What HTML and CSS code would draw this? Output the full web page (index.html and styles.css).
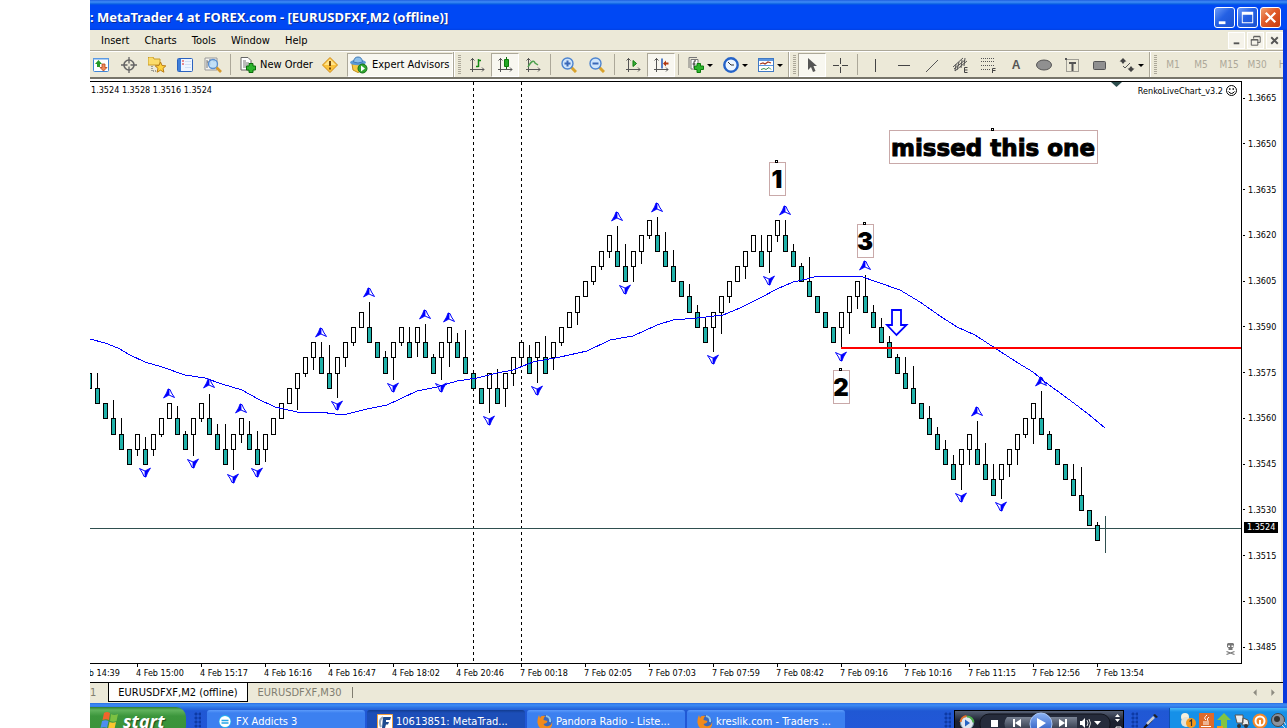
FILE: index.html
```html
<!DOCTYPE html>
<html lang="en">
<head>
<meta charset="utf-8">
<title>MetaTrader 4 at FOREX.com</title>
<link rel="stylesheet" href="styles.css">
</head>
<body>
<main class="window">
  <header class="titlebar">
    <h1 class="title">: MetaTrader 4 at FOREX.com - [EURUSDFXF,M2 (offline)]</h1>
    <div class="winbtns">
      <button class="winbtn" aria-label="Minimize"><svg viewBox="0 0 20 20"><path d="M4 14h7v3H4z" fill="#fff"/></svg></button>
      <button class="winbtn" aria-label="Maximize"><svg viewBox="0 0 20 20"><path d="M4 4h12v12H4zM5 7v8h10V7z" fill="#fff" fill-rule="evenodd"/></svg></button>
      <button class="winbtn close" aria-label="Close"><svg viewBox="0 0 20 20"><path d="M5 5l10 10M15 5L5 15" stroke="#fff" stroke-width="2.4"/></svg></button>
    </div>
  </header>

  <div class="frame">
    <nav class="menubar">
      <button class="menu">Insert</button><button class="menu">Charts</button><button class="menu">Tools</button><button class="menu">Window</button><button class="menu">Help</button>
      <div class="mdibtns">
        <button class="mdi" aria-label="Minimize chart"><svg viewBox="0 0 16 16"><path d="M5 10h6v2H5z" fill="#555"/></svg></button>
        <button class="mdi" aria-label="Restore chart"><svg viewBox="0 0 16 16"><path d="M6 6V4h7v6h-3M6 3.500h7M3.500 7v6h7V7zM3 7.500h8" fill="none" stroke="#555"/></svg></button>
        <button class="mdi" aria-label="Close chart"><svg viewBox="0 0 16 16"><path d="M4.500 4.500l7 7M11.500 4.500l-7 7" stroke="#555" stroke-width="2"/></svg></button>
      </div>
    </nav>

    <div class="toolbar">
      <button class="tool" aria-label="Market Watch"><svg viewBox="0 0 16 16"><rect x=".5" y="1.500" width="15" height="13" rx="1" fill="#fff" stroke="#3f86d6"/><path d="M0 1h16v1.500H0z" fill="#5a9ae4"/><path d="M5.500 3L2 7h2v3h3V7h2z" fill="#259a25"/><path d="M10.500 14L14 10.500h-2V7H9v3.500H7z" fill="#f08a5a" stroke="#b3441c" stroke-width=".8"/></svg></button>
      <button class="tool" aria-label="Data Window"><svg viewBox="0 0 16 16"><circle cx="8" cy="8" r="5" fill="none" stroke="#666" stroke-width="1.600"/><path d="M8 0v6.500M8 9.500V16M0 8h6.500M9.500 8H16" stroke="#666" stroke-width="1.300"/></svg></button>
      <button class="tool wide-icon" aria-label="Navigator"><svg viewBox="0 0 18 16"><path d="M0 1l1-1h4l1 2h6v6H0z" fill="#fbdc6b" stroke="#c89b28"/><path d="M4 9v5h4" fill="none" stroke="#555" stroke-dasharray="1 1"/><path d="M12.500 5l1.600 3.500 3.700.4-2.800 2.500.9 3.800-3.400-2-3.400 2 .9-3.800-2.800-2.500 3.700-.4z" fill="#ffd33e" stroke="#b87a14"/></svg></button>
      <button class="tool" aria-label="Terminal"><svg viewBox="0 0 16 16"><rect x=".5" y="1.500" width="15" height="13" rx="1" fill="#eef5ff" stroke="#2a62bf"/><path d="M1 2h3v12H1z" fill="#3f7fd9"/><path d="M5 4h2M5 7h2" stroke="#d22"/><path d="M8 4.500h6M8 7.500h6M8 10.500h6" stroke="#cfdff5"/></svg></button>
      <button class="tool wide-icon" aria-label="Strategy Tester"><svg viewBox="0 0 18 16"><path d="M1 1h12v12H1z" fill="#f4f4f0" stroke="#999"/><path d="M3 3v8M6 2v6M10 2v3M3 5h2" stroke="#777"/><circle cx="9" cy="7" r="4.500" fill="#b9dcf8" fill-opacity=".85" stroke="#5a8fd0" stroke-width="1.300"/><path d="M12.500 10.500l4.500 4.500" stroke="#d69a2c" stroke-width="2.600"/></svg></button>
      <span class="sep"></span>
      <button class="tool labeled order"><svg viewBox="0 0 16 16"><path d="M1 .5h7l3 3V13H1z" fill="#fff" stroke="#666"/><path d="M3 4h3M3 6h6M3 8h5M3 10h3" stroke="#777"/><path d="M9 6.500h4V9h2.500v4H13v2.500H9V13H6.500V9H9z" fill="#2db52d" stroke="#0c6c0c"/></svg>New Order</button>
      <button class="tool" aria-label="MetaEditor"><svg viewBox="0 0 16 16"><path d="M8 .5L15.500 8 8 15.500.5 8z" fill="#fbc33d" stroke="#cf8a17"/><path d="M8 2L14 8H2z" fill="#ffe48a"/><path d="M8 4v5M8 10.500v2" stroke="#7a4a08" stroke-width="2"/></svg></button>
      <button class="tool labeled expert pressed"><svg viewBox="0 0 18 18"><path d="M2 8h12l-1 6-5 2.500L3 14z" fill="#f5c842" stroke="#c08d1a"/><ellipse cx="8" cy="6.500" rx="8" ry="2.800" fill="#5c9ad4"/><path d="M3.500 6Q4 1 8 1t4.500 5Q8 8 3.500 6z" fill="#8cc0ec" stroke="#3f79b5"/><circle cx="12.500" cy="12.500" r="4.500" fill="#2fa52f" stroke="#15701a"/><path d="M11 9.500l4 3-4 3z" fill="#fff"/></svg>Expert Advisors</button>
      <span class="edge"></span><span class="grip"></span>
      <button class="tool" aria-label="Bar Chart"><svg viewBox="0 0 16 16"><path d="M3.500 1v14M1 12.500h14M1.500 3.500l2-2 2 2M13 10.500l2 2-2 2" fill="none" stroke="#555"/><path d="M9.500 2v8M9.500 3.500H12M7 9.500h2.500" stroke="#138a13" stroke-width="1.500"/></svg></button>
      <button class="tool pressed" aria-label="Candlesticks"><svg viewBox="0 0 16 16"><path d="M3.500 1v14M1 12.500h14M1.500 3.500l2-2 2 2M13 10.500l2 2-2 2" fill="none" stroke="#555"/><path d="M9.500 0v12" stroke="#0c6c0c"/><path d="M7.500 2.500h4v7h-4z" fill="#25a825" stroke="#0c7c0c"/></svg></button>
      <button class="tool" aria-label="Line Chart"><svg viewBox="0 0 16 16"><path d="M3.500 1v14M1 12.500h14M1.500 3.500l2-2 2 2M13 10.500l2 2-2 2" fill="none" stroke="#555"/><path d="M3 10q5-9 7-4l3 2" fill="none" stroke="#4da04d" stroke-width="1.500"/></svg></button>
      <span class="sep"></span>
      <button class="tool" aria-label="Zoom In"><svg viewBox="0 0 16 16"><path d="M10 10l5 5" stroke="#d9a32c" stroke-width="3"/><circle cx="6.500" cy="6.500" r="5.500" fill="#cfe5fb" stroke="#4d84cf" stroke-width="1.400"/><path d="M3.500 6.500h6M6.500 3.500v6" stroke="#3a68b8" stroke-width="2"/></svg></button>
      <button class="tool" aria-label="Zoom Out"><svg viewBox="0 0 16 16"><path d="M10 10l5 5" stroke="#d9a32c" stroke-width="3"/><circle cx="6.500" cy="6.500" r="5.500" fill="#cfe5fb" stroke="#4d84cf" stroke-width="1.400"/><path d="M3.500 6.500h6" stroke="#3a68b8" stroke-width="2"/></svg></button>
      <span class="sep"></span>
      <button class="tool" aria-label="Auto Scroll"><svg viewBox="0 0 16 16"><path d="M3.500 1v14M1 12.500h14M1.500 3.500l2-2 2 2M13 10.500l2 2-2 2" fill="none" stroke="#555"/><path d="M8 3.500v6L11.500 6.500z" fill="#3bb03b" stroke="#0c7c0c"/></svg></button>
      <button class="tool pressed" aria-label="Chart Shift"><svg viewBox="0 0 16 16"><path d="M3.500 1v14M1 12.500h14M1.500 3.500l2-2 2 2M13 10.500l2 2-2 2" fill="none" stroke="#555"/><path d="M9 1.500v10" stroke="#2258b8" stroke-width="1.500"/><path d="M10 6.500l3-3v2h2.500v2H13v2z" fill="#b23a12"/></svg></button>
      <span class="sep"></span>
      <button class="tool drop" aria-label="Indicators"><svg viewBox="0 0 16 16"><path d="M3 2.500h7V12H3zM1 .5h8M1 .5V11" fill="#fff" stroke="#777"/><path d="M8 4q-2-1-2 1v6M4.500 7h3" fill="none" stroke="#333"/><path d="M9 6.500h3.500V9H15.500v3.500H12.500v3H9v-3H6.500V9H9z" fill="#2db52d" stroke="#0c7c0c"/></svg></button>
      <button class="tool drop" aria-label="Periods"><svg viewBox="0 0 16 16"><circle cx="8" cy="8" r="6.700" fill="#eef6ff" stroke="#2563c8" stroke-width="2.400"/><path d="M5 5l3 3h3" fill="none" stroke="#333"/></svg></button>
      <button class="tool drop" aria-label="Templates"><svg viewBox="0 0 16 16"><rect x=".5" y="1.500" width="15" height="13" fill="#fff" stroke="#3f79c4"/><path d="M1 2h14v2H1z" fill="#5c96df"/><path d="M2 7l3-1 2 1 3-2 3 1" fill="none" stroke="#a83a22" stroke-width="1.300"/><path d="M1 8.500h14" stroke="#5c96df"/><path d="M3 12.500l3-1 2 1 3-2 2 2" fill="none" stroke="#3d8d4c"/></svg></button>
      <span class="edge"></span><span class="grip"></span>
      <button class="tool pressed" aria-label="Cursor"><svg viewBox="0 0 16 16"><path d="M4 1v12l3-3 2 5 2.500-1-2-5H13z" fill="#555"/></svg></button>
      <button class="tool" aria-label="Crosshair"><svg viewBox="0 0 16 16"><path d="M8.500 1v6M8.500 10v6M1 8.500h6M10 8.500h6" stroke="#444"/></svg></button>
      <span class="sep"></span>
      <button class="tool" aria-label="Vertical Line"><svg viewBox="0 0 16 16"><path d="M7.500 2v13" stroke="#444"/></svg></button>
      <button class="tool" aria-label="Horizontal Line"><svg viewBox="0 0 16 16"><path d="M2 8.500h12" stroke="#444"/></svg></button>
      <button class="tool" aria-label="Trendline"><svg viewBox="0 0 16 16"><path d="M2 15L14 3" stroke="#555"/></svg></button>
      <button class="tool" aria-label="Equidistant Channel"><svg viewBox="0 0 16 16"><path d="M1 10L11 1M3 14L15 4M2 12L13 3M4 7l-1 7M7 5L5 13M10 3l-1 8M13 1l-1 8" stroke="#555"/><path d="M15.500 10.500h-3v5h3M12.500 13h3" fill="none" stroke="#444"/></svg></button>
      <button class="tool" aria-label="Fibonacci Retracement"><svg viewBox="0 0 16 16"><path d="M1 1.500h14M1 4.500h14M1 8.500h14M1 12.500h9" stroke="#555" stroke-dasharray="1 1"/><path d="M15.500 11.500h-3V16M12.500 13.500h3" fill="none" stroke="#444"/></svg></button>
      <button class="tool letter" aria-label="Text">A</button>
      <button class="tool" aria-label="Ellipse"><svg viewBox="0 0 16 16"><ellipse cx="8" cy="8" rx="7.500" ry="5" fill="#909090" stroke="#555"/></svg></button>
      <button class="tool" aria-label="Text Label"><svg viewBox="0 0 16 16"><rect x="2.500" y="2.500" width="12" height="12" fill="none" stroke="#555" stroke-dasharray="1 1"/><path d="M1 1h2v2H1zM5 5h7v2H9.500v7h-2V7H5z" fill="#555"/></svg></button>
      <button class="tool" aria-label="Rectangle"><svg viewBox="0 0 16 16"><rect x="1.500" y="4.500" width="12" height="8" rx="1" fill="#909090" stroke="#555"/></svg></button>
      <button class="tool drop" aria-label="Arrows"><svg viewBox="0 0 16 16"><path d="M4 1l3.500 3.500H6L4 7 2 4.500H.5zM12 15l-3.500-3.500H10L12 9l2 2.500h1.500z" fill="#444"/><path d="M4 9l2 2 5-5" fill="none" stroke="#555"/></svg></button>
      <span class="edge"></span><span class="grip"></span>
      <button class="tool period">M1</button><button class="tool period">M5</button><button class="tool period">M15</button><button class="tool period">M30</button><button class="tool period">H1</button>
    </div>

    <section class="chart">
      <div class="plot">
        <svg id="plot" class="plot-svg" viewBox="90 82 1151 581" preserveAspectRatio="xMinYMin meet" role="img" aria-label="EURUSD Renko chart">
          <path class="divider" d="M473.500 82V663M521.500 82V663"/>
          <path class="bid" d="M90 528.500H1241M1105.500 516V553"/>
          <g id="candles" class="crisp"></g>
          <polyline class="average" points="90,339 105,343 118,348 130,355 145,362 162,367 185,375 205,378 222,384 242,390 258,399 275,407 297,412 320,412 335,414 347,414 367,409 387,405 400,399 417,391 437,387 457,381 477,378 497,373 513,370 533,362 560,357 587,351 610,340 633,336 657,325 673,320 697,318 723,315 740,308 760,298 777,289 793,282 807,279 817,276 860,276 877,282 900,290 920,302 940,316 957,327 975,335 998,350 1018,363 1033,372 1045,382 1067,398 1087,413 1105,428"/>
          <g id="fractals" class="fractals"></g>
          <path class="level" d="M841 348H1241"/>
          <path d="M892 310h9v15h5.500L896.500 335 887 325h5z" fill="#fff" stroke="#00f" stroke-width="1.800"/>
          <g class="note-box"><rect x="769.500" y="162.500" width="16" height="33"/><rect x="857.500" y="224.500" width="16" height="33"/><rect x="833.500" y="370.500" width="16" height="33"/><rect x="889.500" y="130.500" width="208" height="33"/></g>
          <g class="handle"><path d="M775.500 160.500h2v2h-2zM863.500 222.500h2v2h-2zM839.500 368.500h2v2h-2zM991.500 128.500h2v2h-2z"/></g>
          <g class="note"><text x="777" y="188">1</text><text x="865" y="250">3</text><text x="841" y="396">2</text><text class="remark" x="993" y="156">missed this one</text></g>
          <path d="M1111 82h11l-5.500 5z" fill="#2f4f4f"/>
          <text class="small" x="91" y="93">1.3524 1.3528 1.3516 1.3524</text>
          <text class="small end" x="1223" y="94">RenkoLiveChart_v3.2</text>
          <g fill="none" stroke="#000"><circle cx="1231.500" cy="90.500" r="5"/><path d="M1228.500 91.500q3 4 6 0"/><path d="M1229 89h1.500M1232.500 89h1.500" stroke-width="1.400"/></g>
          <g class="skull"><path d="M1228 643h5l1 1v3l-1.500 1v2h-4v-2l-1.500-1v-3z"/><path d="M1226.500 651.500l8 3M1234.500 651.500l-8 3" stroke="#777" stroke-width="1.300"/><path d="M1228 645.500h2v1.500h-2zM1231.500 645.500h2v1.500h-2z" fill="#fff"/></g>
        </svg>
      </div>
      <div class="prices">
        <span>1.3665</span><span>1.3650</span><span>1.3635</span><span>1.3620</span><span>1.3605</span><span>1.3590</span><span>1.3575</span><span>1.3560</span><span>1.3545</span><span>1.3530</span><span>1.3515</span><span>1.3500</span><span>1.3485</span>
        <output class="last">1.3524</output>
      </div>
      <div class="times">
        <span>4 Feb 14:39</span><span>4 Feb 15:00</span><span>4 Feb 15:17</span><span>4 Feb 16:16</span><span>4 Feb 16:47</span><span>4 Feb 18:02</span><span>4 Feb 20:46</span><span>7 Feb 00:18</span><span>7 Feb 02:05</span><span>7 Feb 07:03</span><span>7 Feb 07:59</span><span>7 Feb 08:42</span><span>7 Feb 09:16</span><span>7 Feb 10:16</span><span>7 Feb 11:15</span><span>7 Feb 12:56</span><span>7 Feb 13:54</span>
      </div>
    </section>

    <div class="tabs">
      <button class="tab first">1</button><button class="tab active">EURUSDFXF,M2 (offline)</button><button class="tab last-tab">EURUSDFXF,M30</button>
      <div class="scrollers"><button class="scroll" aria-label="Scroll tabs left"><svg viewBox="0 0 8 8"><path d="M5 1v6L2 4z" fill="#8d8b80"/></svg></button><button class="scroll" aria-label="Scroll tabs right"><svg viewBox="0 0 8 8"><path d="M3 1v6l3-3z" fill="#8d8b80"/></svg></button></div>
    </div>
  </div>
</main>

<footer class="taskbar">
  <button class="start"><svg viewBox="0 0 20 20"><path d="M4 2q3-2 6 0L9 9Q6 7.500 2.500 9z" fill="#f0642b"/><path d="M11 3q3 2 7 0l-1.500 7q-3 1.500-6.500 0z" fill="#7cc142"/><path d="M2 10q3.500-1.500 6.500 0L7 17q-3-1.500-6.500 0z" fill="#4d8df0"/><path d="M9.500 11q3.500 1.500 6.500 0l-1.500 7q-3 1.500-6.500 0z" fill="#fbc630"/></svg>start</button>
  <span class="dots first-dots"></span>
  <div class="tasks">
    <button class="task"><svg viewBox="0 0 16 16"><path d="M8 1a6.500 6.500 0 0 1 2 12.500L8 16l-2-2.500A6.500 6.500 0 0 1 8 1z" fill="#25b5ee"/><circle cx="8" cy="7.500" r="5.500" fill="#fff"/><path d="M4.500 6.500h7M4.500 9h7" stroke="#25a5e5" stroke-width="1.500"/></svg>FX Addicts 3</button>
    <button class="task current"><svg viewBox="0 0 16 16"><path d="M.5.5h15v15H.5z" fill="#fff" stroke="#f0a040"/><path d="M6 3h8l-1 3H9v2h3l-1 2.500H9L8 14H5z" fill="#1d4b8f"/><path d="M6 3q-5 3-2 10" fill="none" stroke="#9ab" stroke-width="2"/></svg>10613851: MetaTrad...</button>
    <button class="task"><svg viewBox="0 0 16 16"><circle cx="8.500" cy="7.500" r="6.500" fill="#3968bd"/><path d="M9 2q5 1 4 6" fill="none" stroke="#8ec5ef" stroke-width="2"/><path d="M2 1Q0 5 .5 9q1.500 7 8 7t7-8q-1 3-4 4-4 1-5-2l3-1 1-2-4-1q0-3 2-4Q4 1 3 4z" fill="#f28a1c"/></svg>Pandora Radio - Liste...</button>
    <button class="task"><svg viewBox="0 0 16 16"><circle cx="8.500" cy="7.500" r="6.500" fill="#3968bd"/><path d="M9 2q5 1 4 6" fill="none" stroke="#8ec5ef" stroke-width="2"/><path d="M2 1Q0 5 .5 9q1.500 7 8 7t7-8q-1 3-4 4-4 1-5-2l3-1 1-2-4-1q0-3 2-4Q4 1 3 4z" fill="#f28a1c"/></svg>kreslik.com - Traders ...</button>
  </div>
  <span class="dots"></span>
  <div class="player">
    <svg viewBox="0 0 170 20"><defs><linearGradient id="pb" x2="0" y2="1"><stop offset="0" stop-color="#7a8394"/><stop offset="1" stop-color="#2b3243"/></linearGradient><linearGradient id="pp" x2="0" y2="1"><stop offset="0" stop-color="#8db4f5"/><stop offset="1" stop-color="#1c4cb8"/></linearGradient></defs>
    <rect x="25" y="3" width="130" height="20" rx="9" fill="#252b3b" stroke="#10131c"/><path d="M52 6q-5 6 0 14h70V6z" fill="url(#pb)"/>
    <circle cx="12" cy="12" r="6.500" fill="#dfe6ee" stroke="#79a" /><path d="M5.500 11a6.500 6.500 0 0 1 6-6" fill="none" stroke="#e6702a" stroke-width="2"/><path d="M12 5.500a6.500 6.500 0 0 1 6.500 6" fill="none" stroke="#4aa84a" stroke-width="2"/><path d="M10 8.500l5 3.500-5 3.500z" fill="#2464c4"/>
    <path d="M36 9h7v7h-7zM58 8h2v8h-2zM66 8v8l-6-4zM104 8v8l6-4zM110 8h2v8h-2z" fill="#fff"/>
    <circle cx="86" cy="13" r="11" fill="url(#pp)" stroke="#a8c6f8"/><path d="M82 7l9 5-9 6z" fill="#fff"/>
    <path d="M125 10h2l3-3v10l-3-3h-2zM139 10h7l-3.500 4z" fill="#fff"/><path d="M132 9q2 3 0 6M134 8q3 4 0 9" fill="none" stroke="#ddd"/>
    <path d="M160 6l2.500-3 2.500 3zM160 8h5l-2.500 3z" fill="#fff"/><path d="M161 18v-2h5v4" fill="none" stroke="#fff"/></svg>
  </div>
  <span class="dots"></span>
  <svg class="pen" viewBox="0 0 16 16"><path d="M2 15l8-8" stroke="#111" stroke-width="2"/><path d="M5 11l7-7" stroke="#c8ccd2" stroke-width="2.500"/><path d="M11 2l3 3 2-1-3-3z" fill="#222"/></svg>
  <div class="tray">
    <svg viewBox="0 0 16 16"><circle cx="5" cy="4" r="4" fill="#f6efdc"/><circle cx="6" cy="9" r="5" fill="#e6e2d4"/><circle cx="11" cy="10" r="5" fill="#f59a1d"/><path d="M9.500 8.500l2-1.500v6" fill="none" stroke="#333" stroke-width="1.200"/></svg>
    <svg viewBox="0 0 16 16"><path d="M1 0h15v16H1z" fill="#dd6a2a"/><path d="M9 2q-4 3-1 5M11 4q-3 2-1 4M5 9h6M5 11h6M3 13.500h10" fill="none" stroke="#fff"/></svg>
    <svg viewBox="0 0 16 16"><path d="M8 0l7 7h-4v9H5V7H1z" fill="#83c441"/><path d="M1 13h6v3H1z" fill="#f59a1d"/></svg>
    <svg viewBox="0 0 16 16"><path d="M1 2h8v8H3zM9 5l5 2 1 5H8z" fill="#ececec" stroke="#555"/><circle cx="5" cy="13" r="2" fill="#333"/><circle cx="12" cy="13" r="2" fill="#333"/></svg>
    <svg viewBox="0 0 16 16"><circle cx="8" cy="8" r="7.500" fill="#f3872a"/><circle cx="8" cy="8" r="4.500" fill="none" stroke="#fff" stroke-width="2"/><path d="M8 7v5" stroke="#fff" stroke-width="2"/></svg>
    <svg viewBox="0 0 16 16"><circle cx="8" cy="7" r="6.500" fill="#8b929c" stroke="#444"/><circle cx="7" cy="6" r="3" fill="#333"/><path d="M12 12l3 3M14 9l2 3" stroke="#cde"/></svg>
  </div>
</footer>
<script src="chart.js"></script>
</body>
</html>
```

FILE: chart.js
```js
// Each brick: colour (d = falling, u = rising), brick row, wick end in chart units (0 = no wick).
const bricks = `d18,0 d19,373 d20,0 d21,400 d22,418 d23,0 u22,456 d23,437 u22,456 u21,437
u20,0 d21,406 d22,431 u21,456 u20,422 d21,394 d22,424 d23,424 u22,470 u21,443
d22,421 d23,431 u22,462 u21,0 u20,0 u19,0 u18,410 u17,377 u16,370 d17,342
d18,345 u17,398 u16,367 u15,346 u14,0 d15,302 d16,0 d17,351 u16,380 u15,346
d16,327 u15,357 d16,324 d17,354 u16,380 u15,367 d16,333 d17,330 d18,0 d19,0
u18,413 d19,369 u18,407 u17,386 u16,367 d17,345 u16,383 d17,336 u16,370 u15,346
u14,0 u13,325 u12,0 u11,285 u10,270 u9,258 d10,226 d11,244 u10,282 u9,264
u8,239 d9,217 d10,232 d11,250 d12,0 d13,284 d14,305 d15,318 u14,352 u13,334
u12,303 u11,0 u10,279 u9,0 d10,235 u9,273 u8,242 d9,220 d10,244 d11,263
d12,257 d13,0 d14,0 d15,0 u14,348 u13,334 u12,309 d13,275 d14,305 d15,318
d16,336 d17,354 d18,357 d19,366 d20,0 d21,406 d22,427 d23,440 d24,455 u23,490
u22,465 d23,421 d24,443 d25,464 u24,499 u23,477 u22,465 u21,438 u20,444 d21,391
d22,431 d23,0 d24,0 d25,464 d26,467 d27,0 d28,522`.split(/\s+/);

const rowY = n => Math.round(98 + n * 15.25);
let shapes = "";
bricks.forEach((item, i) => {
  const [head, wick] = item.split(",");
  const falling = head[0] === "d";
  const row = Number(head.slice(1));
  const x = 89 + i * 8;
  const top = rowY(row);
  const bottom = rowY(row + 1);
  if (wick !== "0") {
    shapes += `<path class="wick" d="M${x + 0.5} ${falling ? top : bottom}V${wick}"/>`;
  }
  shapes += `<rect class="${falling ? "fall" : "rise"}" x="${x - 1.5}" y="${top + 0.5}" width="4" height="${bottom - top}"/>`;
});
document.getElementById("candles").innerHTML = shapes;

const tops = [[169,389],[209,379],[241,404],[321,328],[369,288],[425,310],[449,313],[617,212],[657,203],[785,206],[865,261],[977,407],[1041,377]];
const bottoms = [[145,468],[193,459],[233,474],[257,468],[337,401],[393,383],[441,383],[489,416],[537,386],[625,285],[713,355],[769,276],[841,352],[961,493],[1001,502]];
const mark = '<path class="solid" d="M0 0H-1L-2.500 4L-5.500 9L0 6Z"/><path class="open" d="M0 0.500H1L2.500 4L5.500 8.500L0 6"/>';
document.getElementById("fractals").innerHTML =
  tops.map(([x, y]) => `<g transform="translate(${x} ${y})">${mark}</g>`).join("") +
  bottoms.map(([x, y]) => `<g transform="translate(${x} ${y + 9}) rotate(180)">${mark}</g>`).join("");
```

FILE: styles.css
```css
* { box-sizing: border-box; }
body {
  margin: 0;
  height: 100vh;
  overflow: hidden;
  padding-left: 90px;
  display: flex;
  flex-direction: column;
  background: #fff;
  color: #000;
  font-family: "DejaVu Sans Condensed", "Noto Sans", sans-serif;
  font-size: 11px;
  line-height: 14px;
}
button {
  font: inherit;
  color: inherit;
  border: 0;
  padding: 0;
  background: none;
  white-space: nowrap;
}
svg { display: block; flex: none; }
.window {
  flex: 1;
  min-height: 0;
  display: flex;
  flex-direction: column;
}

.titlebar {
  height: 30px;
  display: flex;
  align-items: center;
  justify-content: space-between;
  padding: 4px 6px 0 0;
  background: linear-gradient(#1f5fe0 0, #3f8cf8 2px, #0a62e0 4px, #0048f4 5px, #0048f4 28px, #0040e4 30px);
}
.title {
  margin: 0;
  font-family: "Noto Sans", sans-serif;
  font-size: 13px;
  line-height: 18px;
  font-weight: 700;
  color: #fff;
  text-shadow: 1px 1px 0 #0a2a90;
  white-space: nowrap;
}
.winbtns { display: flex; gap: 2px; }
.winbtn {
  width: 21px;
  height: 21px;
  border: 1px solid #fff;
  border-radius: 3px;
  background: linear-gradient(135deg, #6d9cf8, #2460e4 45%, #1b52d0);
}
.close { background: linear-gradient(135deg, #f0a070, #e05a28 45%, #c83c10); }

.frame {
  flex: 1;
  min-height: 0;
  display: flex;
  flex-direction: column;
  border-right: 4px solid #0838dc;
  box-shadow: inset -2px 0 0 #ece9d8;
  background: #fff;
}
.menubar {
  height: 21px;
  flex: none;
  display: flex;
  align-items: center;
  gap: 15px;
  padding: 1px 0 0 11px;
  background: #ece9d8;
  border-bottom: 1px solid #aca899;
}
.mdibtns { display: flex; gap: 2px; margin-left: auto; }
.mdi {
  width: 17px;
  height: 17px;
  background: #f5f3ea;
  border: 1px solid #fff;
}
.toolbar {
  height: 28px;
  flex: none;
  display: flex;
  align-items: center;
  overflow: hidden;
  background: #ece9d8;
  border-top: 1px solid #fff;
  border-bottom: 2px solid #77756a;
}
.tool {
  flex: none;
  width: 28px;
  height: 24px;
  padding-top: 1px;
  display: flex;
  align-items: center;
  justify-content: center;
}
.tool:first-child { margin-left: -3px; }
.tool svg { width: 16px; height: 16px; }
.tool.wide-icon svg { width: 18px; }
.pressed {
  background: #f8f7f0;
  border: 1px solid;
  border-color: #aca899 #fff #fff #aca899;
}
.labeled { width: auto; justify-content: flex-start; gap: 4px; }
.order { width: 81px; padding-left: 5px; }
.expert { width: 106px; margin-left: 3px; padding-left: 2px; }
.tool.expert svg { width: 18px; height: 18px; }
.sep {
  flex: none;
  width: 8px;
  height: 21px;
  background: linear-gradient(#aca899, #aca899) 3px 0 / 1px 100% no-repeat;
}
.edge {
  flex: none;
  width: 2px;
  height: 100%;
  background: #aca899;
  border-right: 1px solid #fff;
}
.grip {
  flex: none;
  width: 8px;
  height: 20px;
  background: repeating-linear-gradient(#aca899 0 1px, #ece9d8 1px 2px) 3px 0 / 3px 100% no-repeat;
}
.drop { width: 35px; gap: 3px; }
.drop::after {
  content: "";
  border: 3px solid transparent;
  border-top-color: #000;
  border-bottom: 0;
}
.letter {
  font-family: "Liberation Sans", sans-serif;
  font-weight: 700;
  font-size: 12px;
  color: #555;
}
.period { color: #aca899; font-size: 10px; }

.chart {
  flex: 1;
  min-height: 0;
  display: grid;
  grid-template-columns: minmax(0, 1fr) 41px;
  grid-template-rows: minmax(0, 1fr) 18px;
  padding-top: 2px;
  font-size: 9px;
  line-height: 10px;
}
.plot {
  min-height: 0;
  border: solid #000;
  border-width: 1px 1px 1px 0;
}
.plot-svg { width: 100%; height: 100%; }
.crisp, .divider, .bid, .average, .note-box, .handle { shape-rendering: crispEdges; }
.divider { stroke: #000; stroke-dasharray: 3 3; }
.bid { stroke: #2f4f4f; }
.wick { stroke: #000; }
.rise { fill: #fff; stroke: #000; }
.fall { fill: #20b2aa; stroke: #000; }
.average { fill: none; stroke: #00f; }
.solid { fill: #00f; stroke: #00f; stroke-width: 0.8; }
.open { fill: none; stroke: #00f; }
.level { stroke: #f00; stroke-width: 2; }
.note-box { fill: none; stroke: #c9a9a9; }
.handle { fill: #fff; stroke: #000; }
.note {
  font-family: Inter, sans-serif;
  font-size: 24px;
  font-weight: 900;
  text-anchor: middle;
}
.remark {
  font-family: "DejaVu Sans", sans-serif;
  font-size: 23px;
  font-weight: 700;
  stroke: #000;
}
.small { font-size: 9px; }
.end { text-anchor: end; }
.skull { fill: #777; }

.prices {
  position: relative;
  display: flex;
  flex-direction: column;
  justify-content: space-between;
  padding: 12px 0 12px 1px;
}
.prices span { display: flex; align-items: center; gap: 3px; }
.prices span::before { content: ""; width: 2px; height: 1px; background: #000; }
.last {
  position: absolute;
  top: 75.7%;
  left: 2px;
  padding: 0 3px 1px;
  background: #000;
  color: #fff;
}
.times {
  grid-column: 1 / 3;
  display: flex;
  overflow: hidden;
}
.times span {
  flex: none;
  width: 64px;
  padding-top: 1px;
  white-space: nowrap;
}
.times span::before {
  content: "";
  display: block;
  width: 1px;
  height: 3px;
  margin: -1px 0 1px 1px;
  background: #000;
}
.times span:first-child { margin-left: -18px; }

.tabs {
  height: 21px;
  flex: none;
  display: flex;
  align-items: flex-start;
  background: #ece9d8;
  border-top: 1px solid #000;
}
.tab { height: 19px; padding-top: 1px; color: #807d70; }
.first { width: 18px; padding-right: 12px; }
.active {
  width: 140px;
  color: #000;
  background: #fff;
  border: solid #000;
  border-width: 0 1px 1px;
}
.last-tab { width: 105px; padding-right: 2px; background: linear-gradient(#807d70, #807d70) right 4px / 1px 11px no-repeat; }
.scrollers { display: flex; gap: 8px; margin: 5px 6px 0 auto; }
.scroll { width: 9px; height: 9px; }

.taskbar {
  flex: none;
  height: 25px;
  overflow: hidden;
  display: flex;
  align-items: flex-start;
  background: linear-gradient(#2a6ee4 0, #3d8cf4 2px, #2a6ee0 5px, #2058d4 8px, #2257d8);
}
.start {
  flex: none;
  width: 96px;
  height: 30px;
  margin-top: 4px;
  padding: 0 0 2px 10px;
  display: flex;
  align-items: center;
  gap: 3px;
  border-radius: 0 10px 12px 0;
  background: linear-gradient(#2f7d2f, #61b35d 3px, #3c963c 9px, #389038);
  color: #fff;
  font: italic 700 18px/20px "Open Sans", sans-serif;
  text-shadow: 1px 1px 1px #1c4a1c;
}
.start svg { width: 20px; height: 20px; }
.dots {
  flex: none;
  width: 7px;
  height: 17px;
  margin-top: 9px;
  background: radial-gradient(circle, #0d3aa5 1px, transparent 2px) 0 0 / 4px 4px;
}
.first-dots { margin: 9px 6px 0 8px; }
.tasks { flex: 1; min-width: 0; display: flex; gap: 2px; }
.task {
  flex: 0 1 158px;
  height: 26px;
  margin-top: 7px;
  padding: 0 4px 2px 10px;
  display: flex;
  align-items: center;
  gap: 3px;
  overflow: hidden;
  border-radius: 3px 3px 0 0;
  background: linear-gradient(#5c9bfa, #3c80f0 3px);
  color: #fff;
}
.task svg { width: 16px; height: 16px; }
.current { background: linear-gradient(#123c90, #1c4eb8 3px); }
.player {
  flex: none;
  width: 170px;
  height: 20px;
  margin: 7px 7px 0 3px;
  background: linear-gradient(#555f74, #1c2130 10px);
  border: 1px solid #000;
  overflow: hidden;
}
.player svg { width: 170px; height: 20px; }
.pen { width: 16px; height: 16px; margin: 10px 11px 0 4px; }
.tray {
  flex: none;
  width: 118px;
  height: 25px;
  margin-top: 5px;
  padding: 5px 0 0 10px;
  display: flex;
  gap: 2px;
  overflow: hidden;
  background: linear-gradient(#48b8f8, #1690e8 4px);
  border-left: 1px solid #0c50b0;
}
.tray svg { width: 16px; height: 16px; }
```
